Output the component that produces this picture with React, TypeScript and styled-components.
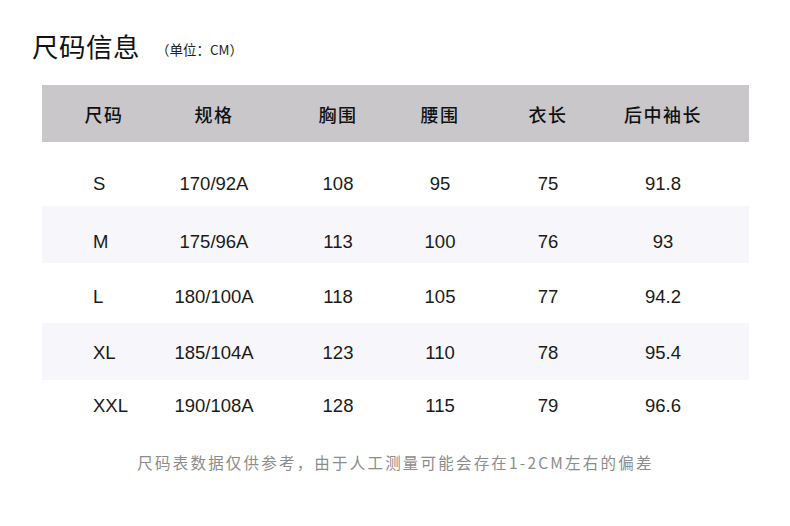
import React from "react";
import styled, { createGlobalStyle } from "styled-components";

const Global = createGlobalStyle`
  html, body { margin: 0; padding: 0; background: #fff; }
  body { font-family: "Liberation Sans", "Noto Sans CJK SC", sans-serif; color: #111; }
`;

const Page = styled.div`
  width: 790px;
  height: 526px;
  background: #fff;
  display: flex;
  flex-direction: column;
  padding: 26px 41px 0 42px;
  box-sizing: border-box;
`;

const TitleRow = styled.div`
  display: flex;
  align-items: baseline;
  gap: 16px;
  margin-left: -10px;
  height: 59px;
`;

const Title = styled.h1`
  margin: 0;
  font-family: "Noto Sans CJK SC", sans-serif;
  font-weight: 400;
  font-size: 26.5px;
  letter-spacing: 0.5px;
  color: #111;
`;

const Unit = styled.span`
  font-family: "Noto Sans CJK SC", sans-serif;
  font-size: 13.5px;
  color: #222;
  position: relative;
  top: -2px;
`;

const COLS = "124px 96px 152px 52px 164px 66px";

const HeaderRow = styled.div`
  display: grid;
  grid-template-columns: ${COLS};
  height: 57px;
  background: #c9c7ca;
  align-items: center;
`;

const Row = styled.div<{ $striped?: boolean; $h: number; $shift: number }>`
  display: grid;
  grid-template-columns: ${COLS};
  height: ${(p) => p.$h}px;
  padding-top: ${(p) => p.$shift}px;
  box-sizing: border-box;
  background: ${(p) => (p.$striped ? "#f7f6fa" : "#fff")};
  align-items: center;
`;

const HeadCell = styled.div`
  display: flex;
  justify-content: center;
  font-family: "Noto Sans CJK SC", sans-serif;
  font-size: 18px;
  letter-spacing: 1.5px;
  font-weight: 500;
  color: #111;
  white-space: nowrap;
`;

const Cell = styled.div<{ $left?: boolean }>`
  display: flex;
  justify-content: ${(p) => (p.$left ? "flex-start" : "center")};
  padding-left: ${(p) => (p.$left ? "51px" : "0")};
  font-family: "Liberation Sans", sans-serif;
  font-size: 18.5px;
  color: #1a1a1a;
  white-space: nowrap;
`;

const Note = styled.p`
  margin: 0;
  margin-top: 19px;
  text-align: center;
  font-family: "Noto Sans CJK SC", sans-serif;
  font-size: 15.5px;
  letter-spacing: 2.2px;
  color: #8c8c8c;
`;

const headers = ["尺码", "规格", "胸围", "腰围", "衣长", "后中袖长"];

const rows: { cells: string[]; h: number; shift: number }[] = [
  { cells: ["S", "170/92A", "108", "95", "75", "91.8"], h: 64, shift: 20 },
  { cells: ["M", "175/96A", "113", "100", "76", "93"], h: 57, shift: 14 },
  { cells: ["L", "180/100A", "118", "105", "77", "94.2"], h: 60, shift: 8 },
  { cells: ["XL", "185/104A", "123", "110", "78", "95.4"], h: 57, shift: 2 },
  { cells: ["XXL", "190/108A", "128", "115", "79", "96.6"], h: 52, shift: 0 },
];

export default function App() {
  return (
    <>
      <Global />
      <Page>
        <TitleRow>
          <Title>尺码信息</Title>
          <Unit>（单位：CM）</Unit>
        </TitleRow>
        <HeaderRow>
          {headers.map((h) => (
            <HeadCell key={h}>{h}</HeadCell>
          ))}
        </HeaderRow>
        {rows.map((r, i) => (
          <Row key={r.cells[0]} $striped={i % 2 === 1} $h={r.h} $shift={r.shift}>
            {r.cells.map((c, j) => (
              <Cell key={j} $left={j === 0}>
                {c}
              </Cell>
            ))}
          </Row>
        ))}
        <Note>尺码表数据仅供参考，由于人工测量可能会存在1-2CM左右的偏差</Note>
      </Page>
    </>
  );
}
